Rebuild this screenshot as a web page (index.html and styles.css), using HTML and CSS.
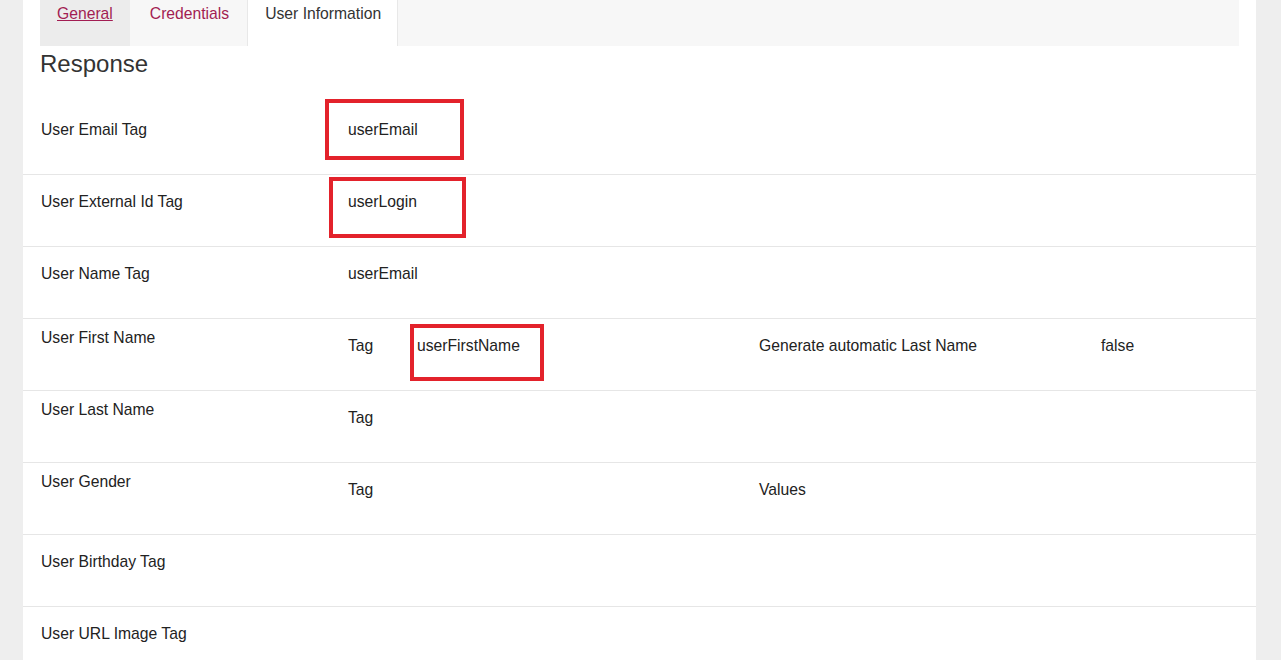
FILE: index.html
```html
<!DOCTYPE html>
<html lang="en">
<head>
<meta charset="utf-8">
<title>User Information</title>
<link rel="stylesheet" href="styles.css">
</head>
<body>
<div class="panel">
  <nav class="tabs">
    <a class="tab tab-general" href="#">General</a>
    <a class="tab tab-cred" href="#">Credentials</a>
    <span class="tab tab-active">User Information</span>
  </nav>
  <h2 class="heading">Response</h2>
  <div class="rows">
    <div class="row">
      <div class="label">User Email Tag</div>
      <div class="value"><span class="mark mark-1"></span>userEmail</div>
    </div>
    <div class="row">
      <div class="label">User External Id Tag</div>
      <div class="value"><span class="mark mark-2"></span>userLogin</div>
    </div>
    <div class="row">
      <div class="label">User Name Tag</div>
      <div class="value">userEmail</div>
    </div>
    <div class="row compound">
      <div class="label">User First Name</div>
      <div class="sub">Tag</div>
      <div class="sub"><span class="mark mark-3"></span>userFirstName</div>
      <div class="sub">Generate automatic Last Name</div>
      <div class="sub">false</div>
    </div>
    <div class="row compound">
      <div class="label">User Last Name</div>
      <div class="sub">Tag</div>
      <div class="sub"></div>
      <div class="sub"></div>
      <div class="sub"></div>
    </div>
    <div class="row compound">
      <div class="label">User Gender</div>
      <div class="sub">Tag</div>
      <div class="sub"></div>
      <div class="sub">Values</div>
      <div class="sub"></div>
    </div>
    <div class="row">
      <div class="label">User Birthday Tag</div>
      <div class="value"></div>
    </div>
    <div class="row">
      <div class="label">User URL Image Tag</div>
      <div class="value"></div>
    </div>
  </div>
</div>
</body>
</html>
```

FILE: styles.css
```css
html, body {
  margin: 0;
  padding: 0;
  background: #eeeeee;
  font-family: "Liberation Sans", Arial, sans-serif;
  font-size: 15.7px;
  color: #222222;
  overflow: hidden;
}

.panel {
  margin-left: 23px;
  width: 1233px;
  min-height: 660px;
  background: #ffffff;
}

.tabs {
  display: flex;
  margin: 0 17px;
  height: 46px;
  background: #f7f7f7;
}

.tab {
  display: block;
  padding: 5px 17px 0;
  line-height: 18px;
  font-size: 15.7px;
  color: #a21d52;
  text-decoration: none;
}

.tab-general {
  background: #ececec;
  text-decoration: underline;
}

.tab-cred {
  padding-left: 20px;
  padding-right: 18px;
}

.tab-active {
  background: #ffffff;
  color: #333333;
  border-left: 1px solid #e8e8e8;
  border-right: 1px solid #e8e8e8;
  padding-left: 17px;
  padding-right: 16px;
}

.heading {
  margin: 4px 0 25px 17px;
  font-size: 24px;
  line-height: 28px;
  font-weight: normal;
  color: #333333;
}

.row {
  display: grid;
  grid-template-columns: 307px 1fr;
  height: 71px;
  border-bottom: 1px solid #e6e6e6;
  padding-left: 18px;
  line-height: 18px;
}

.row.compound {
  grid-template-columns: 307px 69px 342px 342px 1fr;
}

.label {
  padding-top: 18px;
}

.compound .label {
  padding-top: 10px;
}

.value, .sub {
  position: relative;
  padding-top: 18px;
}

.mark {
  position: absolute;
  border: 4px solid #e3222b;
  box-sizing: border-box;
}

.mark-1 {
  left: -23px;
  top: -4px;
  width: 139px;
  height: 61px;
}

.mark-2 {
  left: -19px;
  top: 2px;
  width: 137px;
  height: 61px;
}

.mark-3 {
  left: -7px;
  top: 5px;
  width: 134px;
  height: 57px;
}
```
